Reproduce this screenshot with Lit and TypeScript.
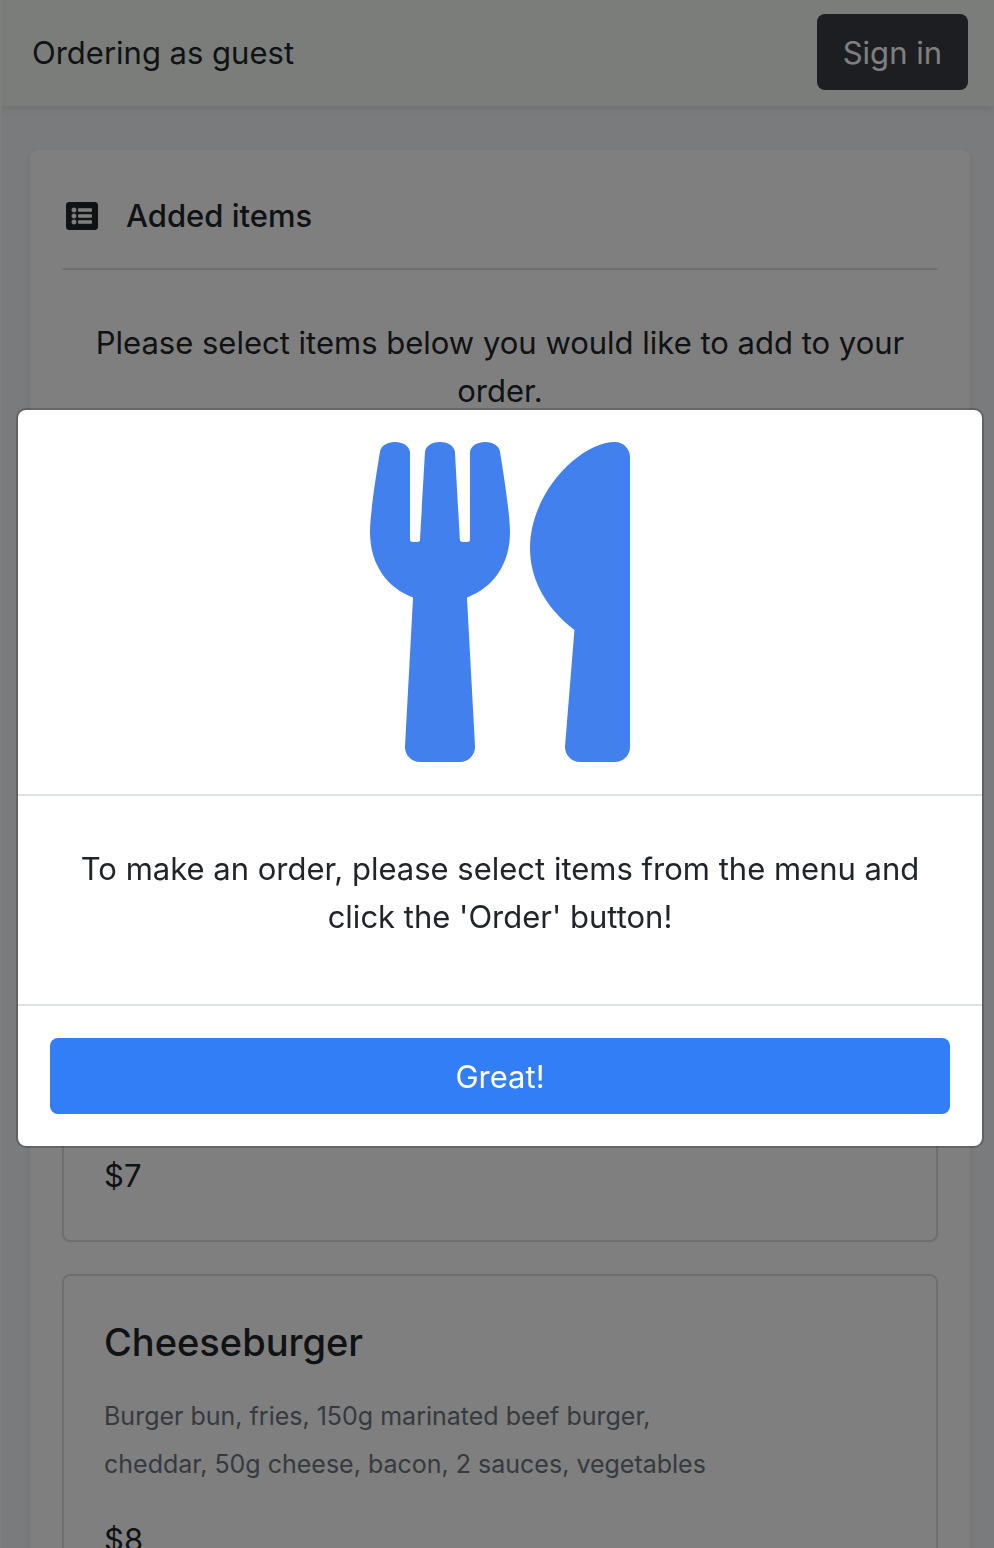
import { LitElement, html, css, svg, nothing } from "lit";
import { customElement, property, state } from "lit/decorators.js";

const utensilsPath = svg`<path d="M207.9 15.2c.8 4.7 16.1 94.5 16.1 128.8 0 52.3-27.8 89.6-68.9 104.6L168 486.7c.7 13.7-10.2 25.3-24 25.3H80c-13.7 0-24.7-11.5-24-25.3l12.9-238.1C27.7 233.6 0 196.2 0 144 0 109.6 15.3 19.9 16.1 15.2 19.3-5.1 61.4-5.4 64 16.3v141.2c1.3 3.4 15.1 3.2 16 0 1.4-25.3 7.9-139.2 8-141.8 3.3-20.8 44.7-20.8 47.9 0 .2 2.7 6.6 116.5 8 141.8.9 3.2 14.8 3.4 16 0V16.3c2.6-21.6 44.8-21.4 47.9-1.1zm119.2 285.7l-15 185.1c-1.2 14 9.9 26 23.9 26h56c13.3 0 24-10.7 24-24V24c0-13.2-10.7-24-24-24-82.5 0-221.4 178.5-64.9 300.9z"/>`;

const listPath = svg`<path d="M464 480H48c-26.51 0-48-21.49-48-48V80c0-26.51 21.49-48 48-48h416c26.51 0 48 21.49 48 48v352c0 26.51-21.49 48-48 48zM128 120c-22.091 0-40 17.909-40 40s17.909 40 40 40 40-17.909 40-40-17.909-40-40-40zm0 96c-22.091 0-40 17.909-40 40s17.909 40 40 40 40-17.909 40-40-17.909-40-40-40zm0 96c-22.091 0-40 17.909-40 40s17.909 40 40 40 40-17.909 40-40-17.909-40-40-40zm288-136v-32c0-6.627-5.373-12-12-12H204c-6.627 0-12 5.373-12 12v32c0 6.627 5.373 12 12 12h200c6.627 0 12-5.373 12-12zm0 96v-32c0-6.627-5.373-12-12-12H204c-6.627 0-12 5.373-12 12v32c0 6.627 5.373 12 12 12h200c6.627 0 12-5.373 12-12zm0 96v-32c0-6.627-5.373-12-12-12H204c-6.627 0-12 5.373-12 12v32c0 6.627 5.373 12 12 12h200c6.627 0 12-5.373 12-12z"/>`;

@customElement("menu-item")
class MenuItem extends LitElement {
  @property() name = "";
  @property() description = "";
  @property() price = "";

  static styles = css`
    :host {
      display: flex;
      flex-direction: column;
      justify-content: flex-end;
      box-sizing: border-box;
      min-height: 332px;
      padding: 40px;
      border: 2px solid #dfdfdf;
      border-radius: 8px;
    }
    .name {
      margin: 0 0 26px;
      font-size: 38px;
      font-weight: 500;
      line-height: 48px;
    }
    .description {
      margin: 0 0 28px;
      max-width: 640px;
      color: #6c757d;
      font-size: 25px;
      line-height: 48px;
    }
    .price {
      margin: 0;
      line-height: 48px;
    }
  `;

  render() {
    return html`
      ${this.name ? html`<h3 class="name">${this.name}</h3>` : nothing}
      ${this.description ? html`<p class="description">${this.description}</p>` : nothing}
      <p class="price">${this.price}</p>
    `;
  }
}

@customElement("welcome-dialog")
class WelcomeDialog extends LitElement {
  static styles = css`
    :host {
      position: fixed;
      inset: 0;
      display: flex;
      align-items: center;
      padding: 8px 10px 0 16px;
      background: rgba(0, 0, 0, 0.5);
    }
    .dialog {
      flex: 1;
      background: #fff;
      background-clip: padding-box;
      border: 2px solid rgba(0, 0, 0, 0.2);
      border-radius: 10px;
    }
    .picture {
      display: flex;
      justify-content: center;
      padding: 32px;
      border-bottom: 2px solid #dee2e6;
    }
    .utensils {
      height: 320px;
      fill: #4280ee;
    }
    .message {
      margin: 0;
      padding: 49px 32px 63px;
      text-align: center;
    }
    .footer {
      padding: 32px;
      border-top: 2px solid #dee2e6;
    }
    .confirm {
      display: block;
      width: 100%;
      padding: 15px 26px 13px;
      border: 0;
      border-radius: 8px;
      background: #317ef6;
      color: #fff;
      font: inherit;
      cursor: pointer;
    }
  `;

  private confirm() {
    this.dispatchEvent(new CustomEvent("confirm"));
  }

  render() {
    return html`
      <div class="dialog" role="dialog" aria-modal="true" aria-describedby="message">
        <div class="picture">
          <svg class="utensils" viewBox="0 0 416 512" aria-hidden="true">${utensilsPath}</svg>
        </div>
        <p class="message" id="message">
          To make an order, please select items from the menu and click the 'Order' button!
        </p>
        <div class="footer">
          <button class="confirm" type="button" @click=${this.confirm}>Great!</button>
        </div>
      </div>
    `;
  }
}

@customElement("app-root")
class AppRoot extends LitElement {
  @state() private welcome = true;

  static styles = css`
    :host {
      display: block;
      box-sizing: border-box;
      height: 100vh;
      overflow: hidden;
      border-left: 1px solid #fff;
      background: #f4f6fa;
      color: #212529;
      font-family: Inter, "Liberation Sans", sans-serif;
      font-size: 31px;
      line-height: 48px;
    }
    .bar {
      display: flex;
      align-items: baseline;
      justify-content: space-between;
      padding: 14px 26px 16px 31px;
      background: #f6fbf7;
      box-shadow: 0 4px 8px rgba(0, 0, 0, 0.075);
    }
    .sign-in {
      padding: 15px 26px 13px;
      border: 0;
      border-radius: 8px;
      background: #3a3c44;
      color: #fff;
      font: inherit;
      cursor: pointer;
    }
    .content {
      display: flex;
      flex-direction: column;
      gap: 32px;
      padding: 44px 24px 44px 29px;
    }
    .card {
      padding: 32px;
      border-radius: 8px;
      background: #fff;
      box-shadow: 0 4px 8px rgba(0, 0, 0, 0.075);
    }
    .heading {
      display: flex;
      align-items: center;
      gap: 28px;
      margin: 0 0 49px;
      padding: 10px 4px 28px;
      border-bottom: 2px solid #dfdfdf;
      font-size: 31px;
      font-weight: 500;
      line-height: 48px;
    }
    .list {
      width: 32px;
      height: 32px;
      fill: currentColor;
    }
    .hint {
      margin: 0;
      padding: 0 32px 16px;
      text-align: center;
    }
    .menu {
      display: grid;
      gap: 32px;
      padding-top: 415px;
    }
  `;

  render() {
    return html`
      <header class="bar">
        <span>Ordering as guest</span>
        <button class="sign-in" type="button">Sign in</button>
      </header>
      <main class="content">
        <section class="card">
          <h2 class="heading">
            <svg class="list" viewBox="0 0 512 512" aria-hidden="true">${listPath}</svg>
            Added items
          </h2>
          <p class="hint">Please select items below you would like to add to your order.</p>
        </section>
        <section class="card menu">
          <menu-item price="$7"></menu-item>
          <menu-item
            name="Cheeseburger"
            description="Burger bun, fries, 150g marinated beef burger, cheddar, 50g cheese, bacon, 2 sauces, vegetables"
            price="$8"
          ></menu-item>
        </section>
      </main>
      ${this.welcome
        ? html`<welcome-dialog @confirm=${() => (this.welcome = false)}></welcome-dialog>`
        : nothing}
    `;
  }
}
